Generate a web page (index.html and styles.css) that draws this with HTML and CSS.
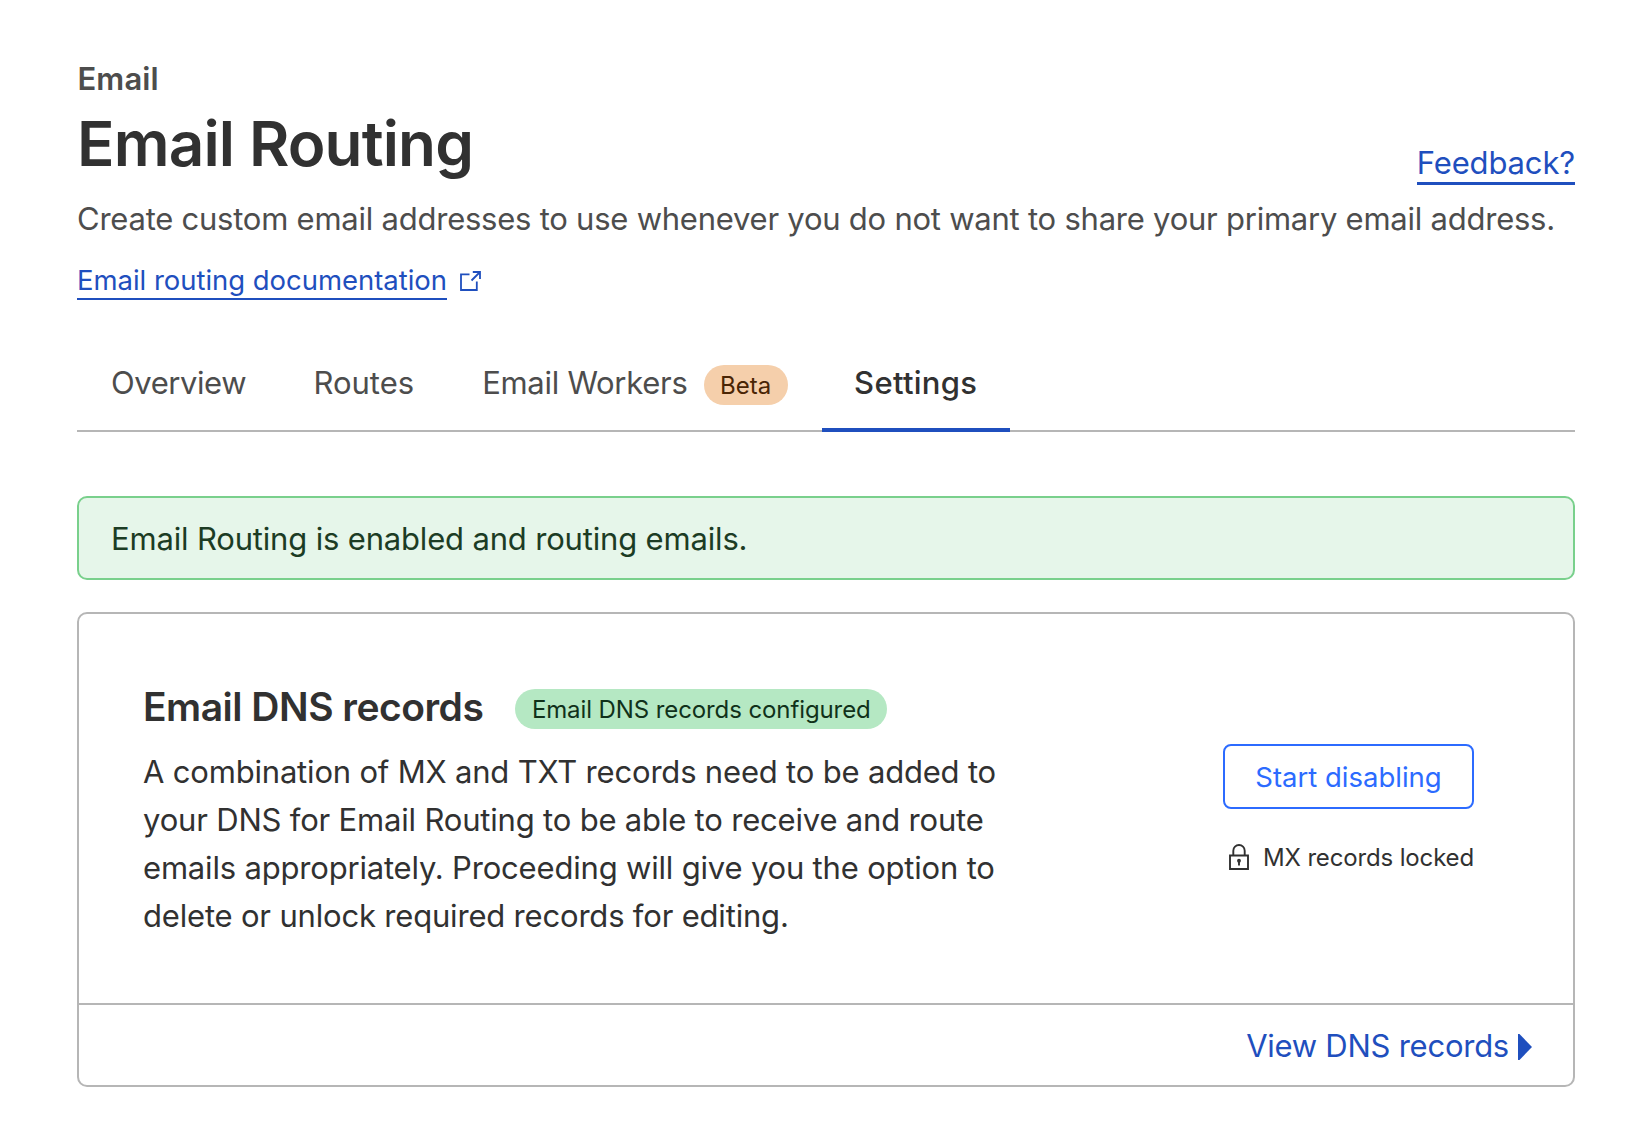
FILE: index.html
```html
<!DOCTYPE html>
<html lang="en">
<head>
<meta charset="utf-8">
<title>Email Routing</title>
<link rel="stylesheet" href="styles.css">
</head>
<body>
<main class="page">
  <header class="header">
    <p class="eyebrow">Email</p>
    <div class="title-row">
      <h1 class="title">Email Routing</h1>
      <a class="feedback" href="#">Feedback?</a>
    </div>
    <p class="lead">Create custom email addresses to use whenever you do not want to share your primary email address.</p>
    <div class="docs">
      <a class="docs-link" href="#">Email routing documentation</a>
      <svg class="external" viewBox="0 0 21 21" fill="none" stroke="currentColor" stroke-width="1.800"><path d="M9.500 3.400H1V19H16.800V10.500M12.800 1H20V8M20 1L11.500 9.500"/></svg>
    </div>
  </header>
  <nav class="tabs">
    <a class="tab tab-overview" href="#">Overview</a>
    <a class="tab" href="#">Routes</a>
    <a class="tab tab-workers" href="#">Email Workers<span class="badge badge-beta">Beta</span></a>
    <a class="tab tab-active" href="#">Settings</a>
  </nav>
  <div class="alert">Email Routing is enabled and routing emails.</div>
  <section class="card">
    <div class="card-body">
      <div class="card-text">
        <div class="card-heading">
          <h2 class="card-title">Email DNS records</h2>
          <span class="badge badge-ok">Email DNS records configured</span>
        </div>
        <p class="card-desc">A combination of MX and TXT records need to be added to<br>your DNS for Email Routing to be able to receive and route<br>emails appropriately. Proceeding will give you the option to<br>delete or unlock required records for editing.</p>
      </div>
      <div class="card-actions">
        <button class="button">Start disabling</button>
        <div class="locked">
          <svg class="lock" viewBox="0 0 20 26" fill="none" stroke="currentColor" stroke-width="1.900"><path d="M1 11.500H19V25H1ZM4.300 11.500V6.700A5.700 5.700 0 0 1 15.700 6.700V11.500"/><path d="M10 16V21.500"/><circle cx="10" cy="16.700" r="1" /></svg>
          <span>MX records locked</span>
        </div>
      </div>
    </div>
    <div class="card-footer">
      <a class="view-link" href="#">View DNS records<svg class="caret" viewBox="0 0 14 26"><path d="M0 0H1.500L14 13L1.500 26H0Z" fill="currentColor"/></svg></a>
    </div>
  </section>
</main>
</body>
</html>
```
FILE: styles.css
```css
* { box-sizing: border-box; }
body { margin: 0; background: #fff; color: #313131; font-family: Inter, "Liberation Sans", sans-serif; font-size: 31px; line-height: 48px; }
h1, h2, p { margin: 0; }
a { text-decoration: none; color: #1f4fbe; }
svg { display: block; flex: none; }
.page { padding: 55px 67px 0 77px; }
.eyebrow { padding-left: 0.500px; font-weight: 600; color: #4d4d4d; letter-spacing: 0.1px; }
.title-row { display: flex; justify-content: space-between; align-items: flex-end; height: 80px; }
.title { font-size: 62px; line-height: 80px; font-weight: 600; letter-spacing: -0.86px; margin-bottom: -1px; }
.feedback { line-height: 38px; border-bottom: 3px solid; margin-bottom: -2px; letter-spacing: -0.14px; }
.lead { margin-top: 12px; color: #4d4d4d; white-space: nowrap; letter-spacing: -0.237px; }
.docs { display: flex; align-items: flex-start; margin-top: 19px; gap: 13px; font-size: 27.500px; line-height: 36px; color: #1f4fbe; }
.docs-link { border-bottom: 2px solid; letter-spacing: -0.035px; }
.external { width: 21px; height: 21px; margin-top: 9px; }
.tabs { display: flex; margin-top: 59px; box-shadow: inset 0 -2px #b6b6b6; height: 73px; }
.tab { display: flex; padding: 0 34px; color: #4d4d4d; }
.tab-overview { letter-spacing: -0.43px; padding-right: 33.300px; }
.tab-workers { letter-spacing: -0.28px; }
.tab-active { width: 188px; padding: 0; justify-content: center; color: #313131; font-weight: 550; letter-spacing: 0.3px; box-shadow: inset 0 -4px #1f4fbe; }
.badge { height: 40px; line-height: 42px; border-radius: 20px; font-size: 24px; padding: 0 16.500px; }
.badge-beta { background: #f5cfab; color: #4a2504; margin: 6px 0 0 16px; letter-spacing: 0; }
.badge-ok { background: #b5e8c3; color: #10311a; letter-spacing: -0.1px; }
.alert { margin-top: 64px; height: 84px; padding: 17px 32px; border: 2px solid #79d08c; border-radius: 10px; background: #e6f6ea; color: #1c3c24; letter-spacing: -0.17px; }
.card { margin-top: 32px; border: 2px solid #b6b6b6; border-radius: 10px; height: 475px; }
.card-body { display: flex; justify-content: space-between; padding: 64px 99px 0 64px; height: 389px; }
.card-heading { display: flex; align-items: center; gap: 32px; height: 58px; padding-top: 4px; }
.card-title { font-size: 39px; font-weight: 600; letter-spacing: -0.5px; margin-top: -5px; }
.card-desc { margin-top: 12px; white-space: nowrap; letter-spacing: -0.185px; }
.card-actions { display: flex; flex-direction: column; align-items: flex-end; padding-top: 66px; }
.button { width: 251px; height: 65px; border: 2px solid #2c6bff; border-radius: 8px; background: #fff; color: #2c6bff; font: inherit; font-size: 27.500px; padding: 0; }
.locked { display: flex; align-items: center; gap: 14px; margin-top: 25px; font-size: 24px; letter-spacing: -0.15px; }
.lock { width: 20px; height: 26px; margin-top: -2px; }
.card-footer { border-top: 2px solid #b6b6b6; height: 82px; padding: 17px 41px 0 0; display: flex; justify-content: flex-end; align-items: flex-start; }
.view-link { display: flex; align-items: center; gap: 9px; letter-spacing: -0.25px; }
.caret { width: 14px; height: 26px; margin-top: 2px; }
```
